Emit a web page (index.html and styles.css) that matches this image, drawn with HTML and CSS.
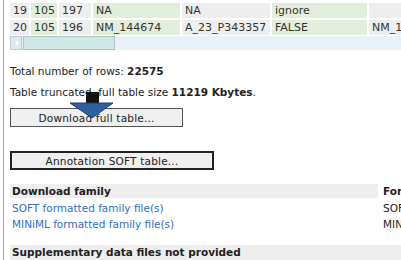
FILE: index.html
```html
<!DOCTYPE html>
<html lang="en">
<head>
    <meta charset="UTF-8">
    <meta name="viewport" content="width=device-width, initial-scale=1.0">
    <title>Platform table</title>
    <link rel="stylesheet" href="styles.css">
</head>
<body>
    <div class="page">
        <div class="data-table">
            <div class="row">
                <div class="cell grey">19</div>
                <div class="cell green">105</div>
                <div class="cell grey">197</div>
                <div class="cell green">NA</div>
                <div class="cell grey">NA</div>
                <div class="cell green">ignore</div>
                <div class="cell grey"></div>
            </div>
            <div class="row">
                <div class="cell grey">20</div>
                <div class="cell green">105</div>
                <div class="cell grey">196</div>
                <div class="cell green">NM_144674</div>
                <div class="cell grey">A_23_P343357</div>
                <div class="cell green">FALSE</div>
                <div class="cell grey">NM_144674</div>
            </div>
        </div>
        <div class="scrollbar">
            <div class="scroll-btn"><span class="scroll-arrow"></span></div>
            <div class="scroll-thumb"></div>
        </div>

        <p class="info first">Total number of rows: <b>22575</b></p>
        <p class="info">Table truncated, full table size <b>11219 Kbytes</b>.</p>

        <div class="btn-wrap">
            <button class="btn">Download full table...</button>
            <svg class="arrow" width="44" height="28" viewBox="0 0 44 28">
                <rect x="16" y="0" width="13" height="13" fill="#111"/>
                <polygon points="0,11 43,11 22,26" fill="#2f5f9c" stroke="#1d3f6e" stroke-width="1"/>
            </svg>
        </div>
        <button class="btn btn-dark">Annotation SOFT table...</button>

        <div class="family">
            <div class="fam-head">Download family</div>
            <div class="fam-head plain">Format</div>
            <div class="fam-cell"><a href="#">SOFT formatted family file(s)</a></div>
            <div class="fam-cell">SOFT</div>
            <div class="fam-cell"><a href="#">MINiML formatted family file(s)</a></div>
            <div class="fam-cell">MINiML</div>
        </div>

        <div class="supp">Supplementary data files not provided</div>
    </div>
</body>
</html>
```
FILE: styles.css
```css
body {
    font-family: "DejaVu Sans", Verdana, sans-serif;
    font-size: 10.5px;
    color: #222;
    background-color: white;
    margin: 0;
    overflow: hidden;
}
.page {
    margin-left: 3px;
    border-left: 1px solid #9aaabb;
    padding-left: 6px;
    padding-top: 3px;
    height: 260px;
    box-sizing: border-box;
    position: relative;
}
.data-table {
    display: flex;
    flex-direction: column;
    gap: 2px;
    overflow: hidden;
    font-size: 11px;
    color: #333;
}
.row {
    display: grid;
    grid-template-columns: 19px 26px 32px 87px 88px 95px 80px;
    gap: 2px;
}
.cell {
    height: 15px;
    line-height: 15px;
    padding-left: 3px;
    white-space: nowrap;
    overflow: hidden;
}
.grey {
    background-color: #eeeeee;
}
.green {
    background-color: #e2eedb;
}
.scrollbar {
    margin-top: 1px;
    height: 14px;
    background-color: #e9f1f8;
    display: flex;
    gap: 1px;
}
.scroll-btn {
    width: 12px;
    background-color: #dfe9ef;
    border: 1px solid #b9cbd4;
    box-sizing: border-box;
    display: flex;
    align-items: center;
    justify-content: center;
}
.scroll-arrow {
    width: 0;
    height: 0;
    border-top: 3px solid transparent;
    border-bottom: 3px solid transparent;
    border-right: 3px solid #fff;
}
.scroll-thumb {
    width: 92px;
    background-color: #d1e7e6;
    border: 1px solid #a9c6c8;
    box-sizing: border-box;
}
.info {
    margin: 7px 0 0 0;
    line-height: 14px;
}
.info.first {
    margin-top: 14px;
}
.btn-wrap {
    position: relative;
    margin-top: 9px;
}
.btn {
    display: block;
    font-family: inherit;
    font-size: 10.5px;
    color: #222;
    background-color: #efefef;
    border: 1px solid #555;
    width: 173px;
    height: 19px;
    padding: 0;
    letter-spacing: 0.2px;
}
.btn-dark {
    margin-top: 24px;
    width: 204px;
    border: 2px solid #222;
}
.arrow {
    position: absolute;
    left: 60px;
    top: -16px;
}
.family {
    display: grid;
    grid-template-columns: 368px 40px;
    column-gap: 3px;
    margin-top: 14px;
}
.fam-head {
    background-color: #eeeeee;
    font-weight: bold;
    height: 14px;
    line-height: 14px;
    padding-left: 2px;
    white-space: nowrap;
}
.fam-head.plain {
    background-color: white;
}
.fam-cell {
    height: 16px;
    line-height: 17px;
    padding-left: 2px;
    white-space: nowrap;
    overflow: hidden;
}
.fam-cell:nth-child(3) {
    margin-top: 2px;
}
.fam-cell:nth-child(4) {
    margin-top: 2px;
}
a {
    color: #2d6fc0;
    text-decoration: none;
}
.supp {
    margin-top: 13px;
    background-color: #eeeeee;
    font-weight: bold;
    height: 15px;
    line-height: 15px;
    padding-left: 2px;
}
```
